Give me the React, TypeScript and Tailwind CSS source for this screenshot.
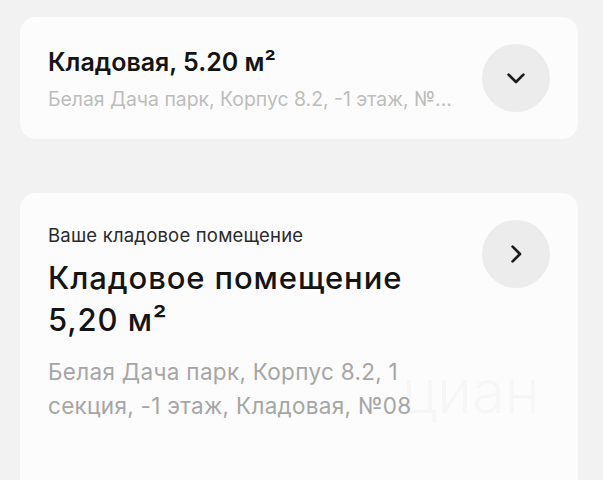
import React from "react";

const font = { fontFamily: "Inter, 'Noto Sans', sans-serif" };

function ChevronDown() {
  return (
    <svg width="18" height="11" viewBox="0 0 18 11" fill="none">
      <polyline points="1.6,1.6 9,9 16.4,1.6" stroke="#1c1c1c" strokeWidth="2.7" strokeLinecap="round" strokeLinejoin="round" />
    </svg>
  );
}

function ChevronRight() {
  return (
    <svg width="11" height="18" viewBox="0 0 11 18" fill="none">
      <polyline points="1.6,1.6 9,9 1.6,16.4" stroke="#1c1c1c" strokeWidth="2.7" strokeLinecap="round" strokeLinejoin="round" />
    </svg>
  );
}

export default function App() {
  return (
    <div className="w-[603px] h-[480px] overflow-hidden bg-[#f2f2f2] pt-[17px] px-[20px] flex flex-col gap-[54px]" style={font}>
      <div className="shrink-0 w-[558px] h-[122px] rounded-[16px] bg-[#fcfcfc] pl-[28px] pr-[28px] flex items-center justify-between">
        <div className="flex flex-col gap-[9px] w-[420px] min-w-0">
          <div className="text-[25px] leading-[32px] font-semibold text-[#141414]">Кладовая, 5.20 м²</div>
          <div className="text-[19.4px] leading-[24px] text-[#bdbdbd] truncate">Белая Дача парк, Корпус 8.2, -1 этаж, №...</div>
        </div>
        <div className="w-[68px] h-[68px] rounded-full bg-[#ececec] flex items-center justify-center shrink-0">
          <ChevronDown />
        </div>
      </div>

      <div className="shrink-0 relative w-[558px] h-[320px] rounded-[16px] bg-[#fcfcfc] pl-[28px] pr-[28px] pt-[27px] flex items-start justify-between">
        <div className="absolute left-[382px] top-[163px] text-[60px] leading-[70px] font-light text-[#f6f6f6] select-none">циан</div>
        <div className="relative flex flex-col mt-[3px]">
          <div className="text-[18.5px] leading-[24px] text-[#2a2a2a] tracking-[0.2px]">Ваше кладовое помещение</div>
          <div className="mt-[10px] text-[31px] leading-[42px] font-medium text-[#141414] tracking-[0.9px]">
            Кладовое помещение
            <br />
            5,20 м²
          </div>
          <div className="mt-[14px] text-[22.5px] leading-[34px] text-[#a6a6a6] tracking-[0.3px]">
            Белая Дача парк, Корпус 8.2, 1
            <br />
            секция, -1 этаж, Кладовая, №08
          </div>
        </div>
        <div className="relative w-[68px] h-[68px] rounded-full bg-[#ececec] flex items-center justify-center shrink-0">
          <ChevronRight />
        </div>
      </div>
    </div>
  );
}
